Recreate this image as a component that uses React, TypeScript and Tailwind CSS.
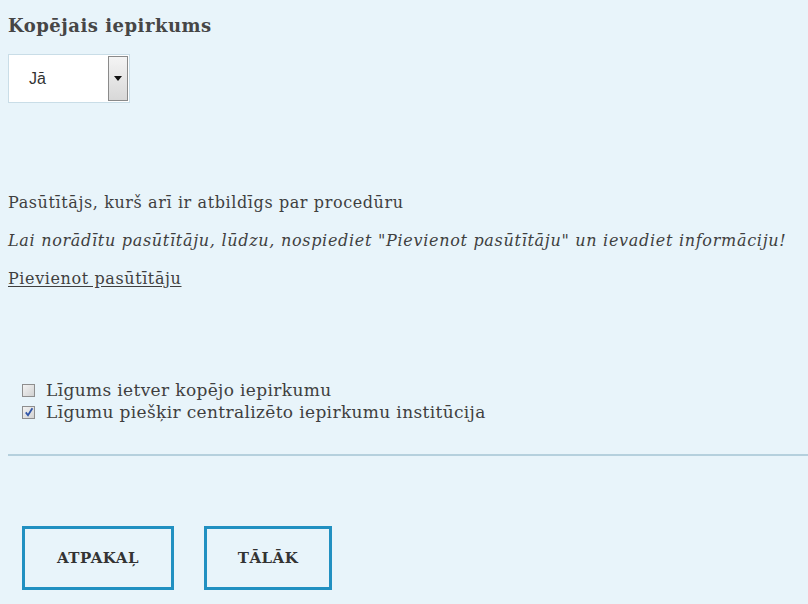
import React, { useState } from "react";

const SLAB = "font-['DejaVu_Serif',serif]";

function Box({ checked, onChange }: { checked: boolean; onChange: (v: boolean) => void }) {
  return (
    <span
      role="checkbox"
      aria-checked={checked}
      onClick={() => onChange(!checked)}
      className="flex h-[13px] w-[13px] shrink-0 items-center justify-center border border-[#8e8e8e] bg-linear-to-br from-[#f3f3f3] to-[#d2d2d2]"
    >
      {checked && (
        <svg width="10" height="10" viewBox="0 0 10 10">
          <path d="M1.8 5.4 4 8.2 8.4 1.2" fill="none" stroke="#2f55a8" strokeWidth="1.8" />
        </svg>
      )}
    </span>
  );
}

export default function App() {
  const [shared, setShared] = useState(false);
  const [central, setCentral] = useState(true);

  return (
    <main className={`min-h-[604px] w-full bg-[#e8f4fa] text-[#3f3f3f] ${SLAB}`}>
      <div className="px-2 pt-[14px]">
        {/* --- Kopējais iepirkums --- */}
        <h2 className="text-[18px] font-bold leading-6 tracking-[0.5px] text-[#464646]">Kopējais iepirkums</h2>
        <div className="mt-[16px] flex h-[49px] w-[122px] items-stretch border border-[#c9dde7] bg-white">
          <span className="flex flex-1 items-center pl-[20px] font-['Liberation_Sans',sans-serif] text-[16px] text-[#333]">
            Jā
          </span>
          <span className="my-[1px] mr-[1px] flex w-[20px] items-center justify-center border border-[#8a8a8a] bg-linear-to-b from-[#f4f4f4] to-[#d8d8d8]">
            <svg width="8" height="5" viewBox="0 0 8 5">
              <path d="M0 0h8L4 5z" fill="#111" />
            </svg>
          </span>
        </div>

        {/* --- Pasūtītājs --- */}
        <p className="mt-[89px] text-[16px] leading-[22px] tracking-[0.6px]">Pasūtītājs, kurš arī ir atbildīgs par procedūru</p>
        <p className="mt-[16px] text-[16px] italic leading-[22px] tracking-[0.7px]">
          Lai norādītu pasūtītāju, lūdzu, nospiediet "Pievienot pasūtītāju" un ievadiet informāciju!
        </p>
        <a href="#" className="mt-[16px] inline-block text-[16px] leading-[22px] tracking-[0.6px] text-[#3f3f3f] underline underline-offset-2">
          Pievienot pasūtītāju
        </a>

        {/* --- Checkboxes --- */}
        <div className="mt-[88px] flex flex-col pl-[14px] text-[17px] leading-[22px] tracking-[0.35px]">
          <label className="flex items-center gap-[11px]">
            <Box checked={shared} onChange={setShared} />
            Līgums ietver kopējo iepirkumu
          </label>
          <label className="flex items-center gap-[11px]">
            <Box checked={central} onChange={setCentral} />
            Līgumu piešķir centralizēto iepirkumu institūcija
          </label>
        </div>
      </div>

      <hr className="ml-2 mt-[31px] border-0 border-t-2 border-[#b5d0dd]" />

      {/* --- Buttons --- */}
      <div className="mt-[70px] flex gap-[30px] pl-[22px] pb-[14px]">
        <button className="h-[64px] w-[152px] border-[3px] border-[#2190c1] bg-transparent text-[15px] font-bold tracking-[0.5px] text-[#333]">
          ATPAKAĻ
        </button>
        <button className="h-[64px] w-[128px] border-[3px] border-[#2190c1] bg-transparent text-[15px] font-bold tracking-[0.5px] text-[#333]">
          TĀLĀK
        </button>
      </div>
    </main>
  );
}
